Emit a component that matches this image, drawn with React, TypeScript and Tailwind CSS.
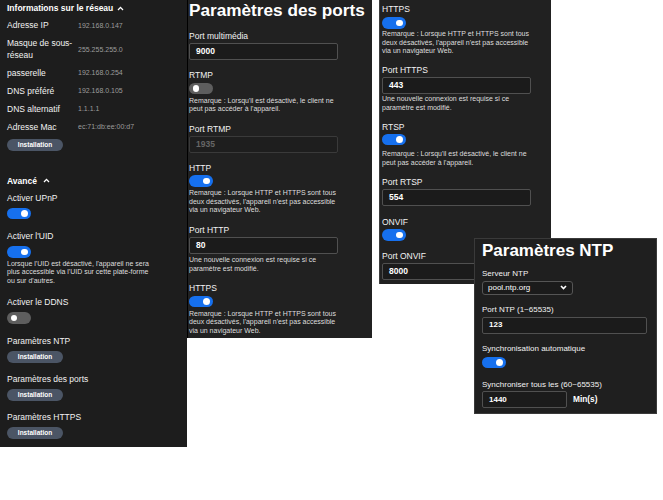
import React from "react";

function ChevronUp() {
  return (
    <svg width="7" height="5" viewBox="0 0 7 5" className="shrink-0">
      <polyline points="1,4 3.5,1.4 6,4" fill="none" stroke="#ffffff" strokeWidth="1.3" />
    </svg>
  );
}

function ChevronDown() {
  return (
    <svg width="7" height="5" viewBox="0 0 7 5" className="shrink-0">
      <polyline points="1,1 3.5,3.6 6,1" fill="none" stroke="#ffffff" strokeWidth="1.6" />
    </svg>
  );
}

function Toggle({ on, className = "" }: { on: boolean; className?: string }) {
  return (
    <div className={className}>
      <div
        className={
          on
            ? "flex h-[11.5px] w-[24px] items-center justify-end rounded-full bg-[#1670ee] px-[3.5px]"
            : "flex h-[11.5px] w-[24px] items-center justify-start rounded-full bg-[#5e5e5e] px-[3.5px]"
        }
      >
        <div className="h-[6.5px] w-[6.5px] rounded-full bg-white" />
      </div>
    </div>
  );
}

function Label({ children, className = "" }: { children: React.ReactNode; className?: string }) {
  return (
    <div className={`whitespace-nowrap text-[8.5px] leading-[11px] text-[#f2f2f2] ${className}`}>{children}</div>
  );
}

function Remark({ lines, className = "" }: { lines: string[]; className?: string }) {
  return (
    <div className={`whitespace-nowrap text-[7px] leading-[8.5px] text-[#dedede] ${className}`}>
      {lines.map((l, i) => (
        <div key={i}>{l}</div>
      ))}
    </div>
  );
}

function Field({ value, disabled = false, className = "" }: { value: string; disabled?: boolean; className?: string }) {
  return (
    <div className={className}>
      <div
        className={
          disabled
            ? "flex h-[17px] w-[149px] items-center rounded-[2px] border border-[#3a3a3a] bg-[#1e1e1e] pl-[6px] text-[8.5px] font-bold text-[#666666]"
            : "flex h-[17px] w-[149px] items-center rounded-[2px] border border-[#505050] bg-[#1b1b1b] pl-[6px] text-[8.5px] font-bold text-white"
        }
      >
        {value}
      </div>
    </div>
  );
}

function InstallBtn({ className = "" }: { className?: string }) {
  return (
    <div className={className}>
      <div className="flex h-[12px] w-[56px] items-center justify-center rounded-full bg-[#4b5565] text-[6.5px] font-bold text-white">
        Installation
      </div>
    </div>
  );
}

const httpRemark = [
  "Remarque : Lorsque HTTP et HTTPS sont tous",
  "deux désactivés, l'appareil n'est pas accessible",
  "via un navigateur Web.",
];
const clientRemark = ["Remarque : Lorsqu'il est désactivé, le client ne", "peut pas accéder à l'appareil."];
const reconnRemark = ["Une nouvelle connexion est requise si ce", "paramètre est modifié."];

function LeftPanel() {
  const rows: [string, string][] = [
    ["Adresse IP", "192.168.0.147"],
    ["Masque de sous-réseau", "255.255.255.0"],
    ["passerelle", "192.168.0.254"],
    ["DNS préféré", "192.168.0.105"],
    ["DNS alternatif", "1.1.1.1"],
    ["Adresse Mac", "ec:71:db:ee:00:d7"],
  ];
  return (
    <div className="absolute left-0 top-0 flex h-[447px] w-[187px] flex-col bg-[#1d1d1d] px-[7px] pt-[2px]">
      <div className="flex h-[12px] items-center gap-[3.5px] whitespace-nowrap text-[8.5px] font-bold leading-[12px] text-white">
        <span>Informations sur le réseau</span>
        <ChevronUp />
      </div>
      <div className="mt-[6.25px] flex flex-col gap-[6.5px]">
        {rows.map(([l, v]) => (
          <div key={l} className="flex items-center">
            <div className="w-[71px] shrink-0 text-[8.5px] leading-[11.5px] text-[#f2f2f2]">{l}</div>
            <div className="whitespace-nowrap text-[7px] text-[#9c9c9c]">{v}</div>
          </div>
        ))}
      </div>
      <InstallBtn className="mt-[5.75px]" />

      <div className="mt-[23.7px] flex h-[12px] items-center gap-[6px] text-[8.5px] font-bold leading-[12px] text-white">
        <span>Avancé</span>
        <ChevronUp />
      </div>
      <Label className="mt-[6px]">Activer UPnP</Label>
      <Toggle on className="mt-[4px]" />
      <Label className="mt-[12px]">Activer l'UID</Label>
      <Toggle on className="mt-[4px]" />
      <Remark
        className="mt-[2px]"
        lines={[
          "Lorsque l'UID est désactivé, l'appareil ne sera",
          "plus accessible via l'UID sur cette plate-forme",
          "ou sur d'autres.",
        ]}
      />
      <Label className="mt-[12px]">Activer le DDNS</Label>
      <Toggle on={false} className="mt-[4px]" />
      <Label className="mt-[12px]">Paramètres NTP</Label>
      <InstallBtn className="mt-[4px]" />
      <Label className="mt-[11px]">Paramètres des ports</Label>
      <InstallBtn className="mt-[4px]" />
      <Label className="mt-[11px]">Paramètres HTTPS</Label>
      <InstallBtn className="mt-[4px]" />
    </div>
  );
}

function PortsPanel() {
  return (
    <div className="absolute left-[187px] top-0 flex h-[338px] w-[185px] flex-col border-l border-black bg-[#212121] pl-[1px]">
      <div className="whitespace-nowrap text-[17.2px] font-bold leading-[21px] text-white">Paramètres des ports</div>
      <Label className="mt-[9.5px]">Port multimédia</Label>
      <Field value="9000" className="mt-[1px]" />
      <Label className="mt-[10.5px]">RTMP</Label>
      <Toggle on={false} className="mt-[1.5px]" />
      <Remark className="mt-[2.5px]" lines={clientRemark} />
      <Label className="mt-[10px]">Port RTMP</Label>
      <Field value="1935" disabled className="mt-[1px]" />
      <Label className="mt-[10px]">HTTP</Label>
      <Toggle on className="mt-[1.5px]" />
      <Remark className="mt-[2.5px]" lines={httpRemark} />
      <Label className="mt-[10.5px]">Port HTTP</Label>
      <Field value="80" className="mt-[1px]" />
      <Remark className="mt-[2px]" lines={reconnRemark} />
      <Label className="mt-[10px]">HTTPS</Label>
      <Toggle on className="mt-[1.5px]" />
      <Remark className="mt-[2.5px]" lines={httpRemark} />
    </div>
  );
}

function RightPortsPanel() {
  return (
    <div className="absolute left-[379px] top-0 flex h-[284px] w-[172px] flex-col border-l border-[#3d3d3d] bg-[#212121] pl-[2px] pt-[4px]">
      <Label>HTTPS</Label>
      <Toggle on className="mt-[2px]" />
      <Remark className="mt-[1.5px]" lines={httpRemark} />
      <Label className="mt-[9.5px]">Port HTTPS</Label>
      <Field value="443" className="mt-[1px]" />
      <Remark className="mt-[1px]" lines={reconnRemark} />
      <Label className="mt-[9.5px]">RTSP</Label>
      <Toggle on className="mt-[1px]" />
      <Remark className="mt-[5px]" lines={clientRemark} />
      <Label className="mt-[9.5px]">Port RTSP</Label>
      <Field value="554" className="mt-[1px]" />
      <Label className="mt-[11px]">ONVIF</Label>
      <Toggle on className="mt-[1.5px]" />
      <Label className="mt-[10px]">Port ONVIF</Label>
      <Field value="8000" className="mt-[1px]" />
    </div>
  );
}

function NtpPanel() {
  return (
    <div className="absolute left-[474px] top-[238px] flex h-[176px] w-[183px] flex-col border border-[#3a3a3a] bg-[#1f1f1f] px-[7px] pt-[1.8px]">
      <div className="whitespace-nowrap text-[17px] font-bold leading-[20px] text-white">Paramètres NTP</div>
      <div className="mt-[8.2px] whitespace-nowrap text-[8px] leading-[10px] text-[#f2f2f2]">Serveur NTP</div>
      <div className="mt-[1.7px] flex h-[14px] w-[91px] items-center justify-between rounded-[3px] border border-[#555555] bg-[#1b1b1b] pl-[5px] pr-[5px] text-[8px] text-white">
        <span>pool.ntp.org</span>
        <ChevronDown />
      </div>
      <div className="mt-[10.7px] whitespace-nowrap text-[8px] leading-[10px] text-[#f2f2f2]">Port NTP (1~65535)</div>
      <div className="mt-[1.7px] flex h-[16.6px] w-[165px] items-center rounded-[2px] border border-[#505050] bg-[#1b1b1b] pl-[6px] text-[8px] font-bold text-white">
        123
      </div>
      <div className="mt-[10.7px] whitespace-nowrap text-[8px] leading-[10px] text-[#f2f2f2]">Synchronisation automatique</div>
      <div className="mt-[2.7px]">
        <div className="flex h-[11px] w-[24px] items-center justify-end rounded-full bg-[#1670ee] px-[3.5px]">
          <div className="h-[6.5px] w-[6.5px] rounded-full bg-white" />
        </div>
      </div>
      <div className="mt-[11.6px] whitespace-nowrap text-[8px] leading-[10px] text-[#f2f2f2]">
        Synchroniser tous les (60~65535)
      </div>
      <div className="mt-[1.4px] flex items-center gap-[6px]">
        <div className="flex h-[17px] w-[85px] items-center rounded-[2px] border border-[#505050] bg-[#1b1b1b] pl-[6px] text-[8px] font-bold text-white">
          1440
        </div>
        <span className="text-[8.3px] font-bold text-white">Min(s)</span>
      </div>
    </div>
  );
}

export default function App() {
  return (
    <div className="relative h-[500px] w-[663px] overflow-hidden bg-white font-['Liberation_Sans',Arial,sans-serif]">
      <LeftPanel />
      <PortsPanel />
      <RightPortsPanel />
      <NtpPanel />
    </div>
  );
}
